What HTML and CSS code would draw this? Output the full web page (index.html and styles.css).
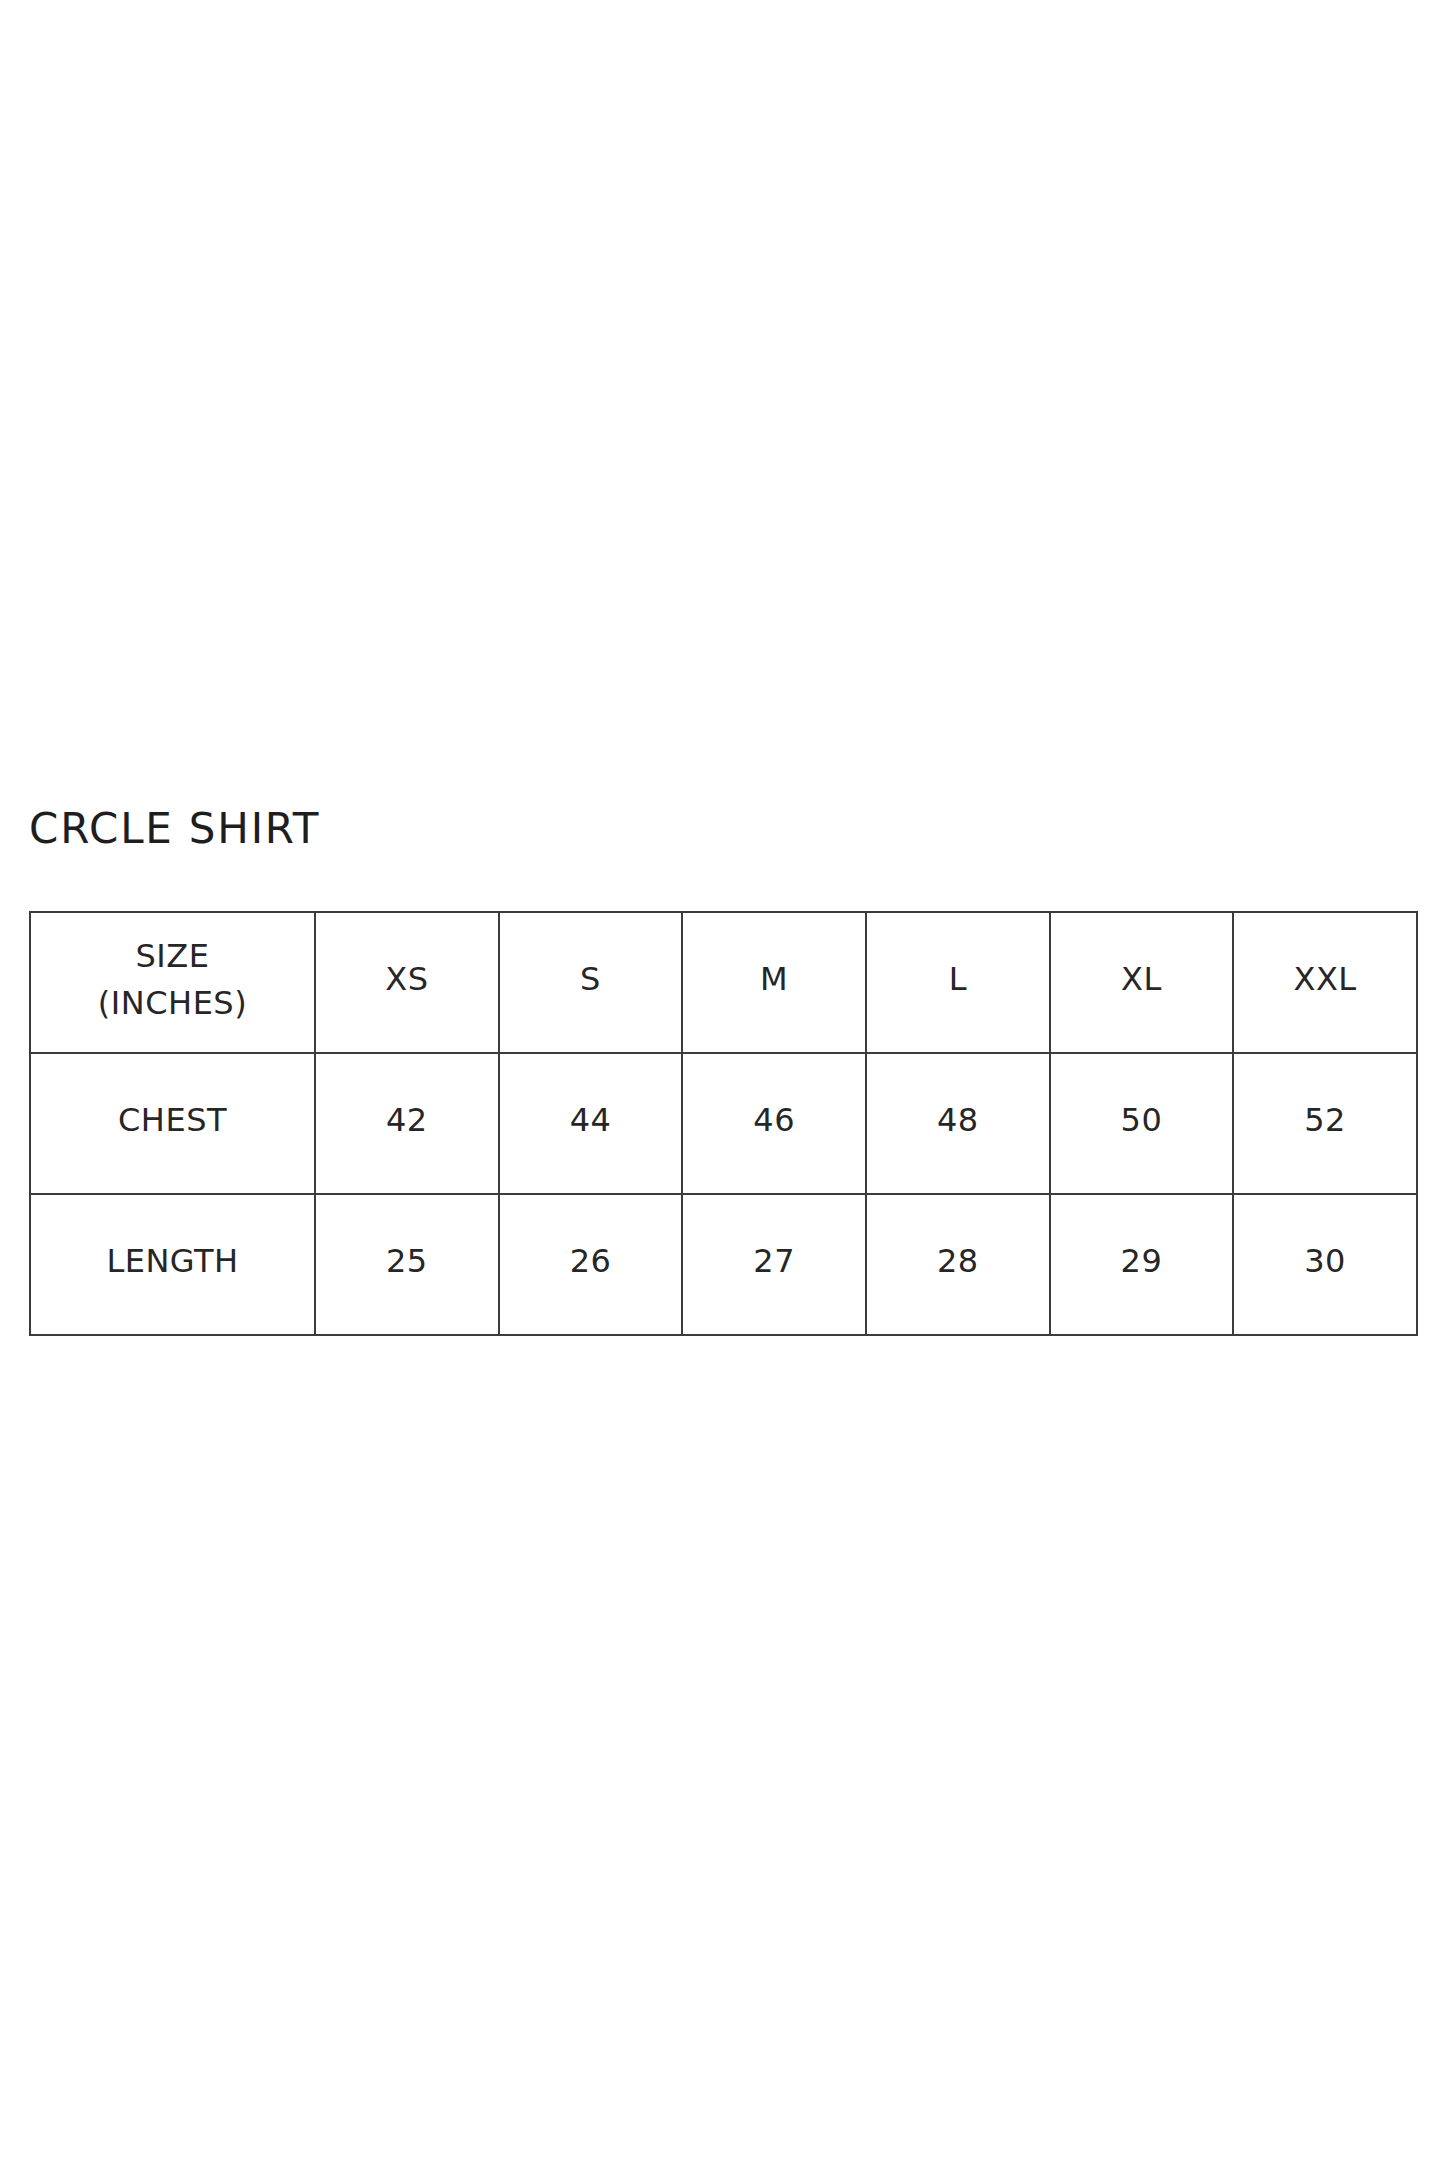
FILE: index.html
```html
<!DOCTYPE html>
<html lang="en">
<head>
<meta charset="utf-8">
<title>CRCLE SHIRT size chart</title>
<link rel="stylesheet" href="styles.css">
</head>
<body>
<main class="page">
  <h1 class="title">CRCLE SHIRT</h1>
  <table class="chart">
    <colgroup>
      <col class="col-label">
      <col class="col-size"><col class="col-size"><col class="col-size">
      <col class="col-size"><col class="col-size"><col class="col-size">
    </colgroup>
    <tbody>
      <tr>
        <td class="label">SIZE<br>(INCHES)</td>
        <td>XS</td><td>S</td><td>M</td><td>L</td><td>XL</td><td>XXL</td>
      </tr>
      <tr>
        <td class="label">CHEST</td>
        <td>42</td><td>44</td><td>46</td><td>48</td><td>50</td><td>52</td>
      </tr>
      <tr>
        <td class="label">LENGTH</td>
        <td>25</td><td>26</td><td>27</td><td>28</td><td>29</td><td>30</td>
      </tr>
    </tbody>
  </table>
</main>
</body>
</html>
```

FILE: styles.css
```css
html, body {
  margin: 0;
  padding: 0;
  background: #ffffff;
}

body {
  font-family: "DejaVu Sans", "Noto Sans", sans-serif;
  color: #222222;
}

.page {
  display: flex;
  flex-direction: column;
  padding: 804px 28px 0 29px;
  min-height: 2168px;
  box-sizing: border-box;
}

.title {
  margin: 0 0 57px 0;
  font-size: 42px;
  line-height: 50px;
  font-weight: normal;
  letter-spacing: 1.8px;
  color: #1e1e1e;
}

.chart {
  border-collapse: collapse;
  table-layout: fixed;
  width: 1387px;
}

.col-label { width: 285px; }
.col-size { width: 183.67px; }

.chart td {
  border: 2px solid #3c3c3c;
  height: 141px;
  padding: 0 0 6px 0;
  box-sizing: border-box;
  text-align: center;
  vertical-align: middle;
  font-size: 32px;
  line-height: 47px;
  letter-spacing: 0.5px;
  color: #262626;
}
```
